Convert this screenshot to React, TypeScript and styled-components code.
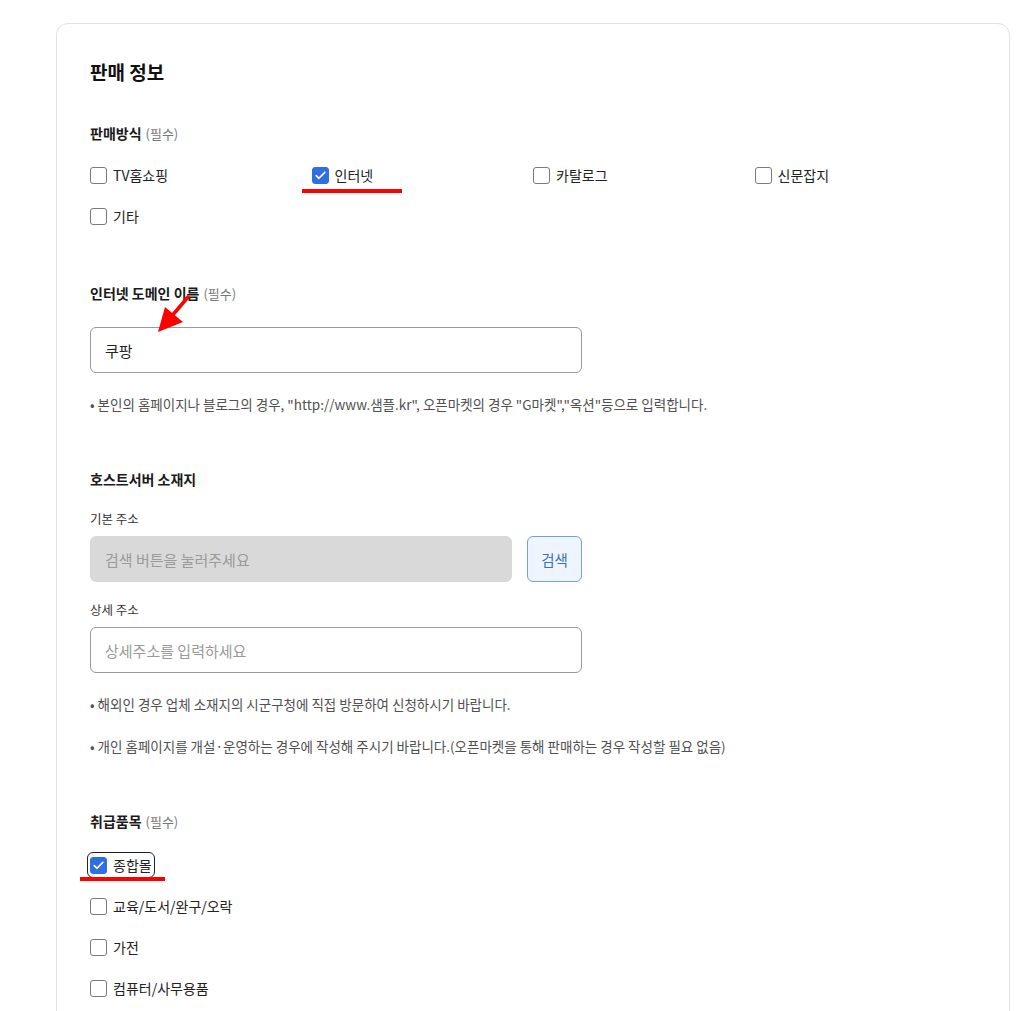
import React from "react";
import styled, { createGlobalStyle } from "styled-components";

const Global = createGlobalStyle`
  html, body { margin: 0; padding: 0; background: #ffffff; }
  body { font-family: "Noto Sans CJK KR", "Noto Sans", sans-serif; color: #222; }
  * { box-sizing: border-box; }
`;

const Page = styled.div`
  padding: 23px 0 0 56px;
  height: 1011px;
  overflow: hidden;
`;

const Card = styled.section`
  position: relative;
  width: 954px;
  min-height: 1100px;
  border: 1px solid #e2e2e2;
  border-radius: 12px;
  padding: 34px 33px 40px 33px;
  display: flex;
  flex-direction: column;
`;

const Title = styled.h2`
  margin: 0;
  font-size: 19px;
  line-height: 28px;
  font-weight: 700;
  color: #111;
`;

const Label = styled.div<{ $mt: number }>`
  margin-top: ${(p) => p.$mt}px;
  font-size: 14px;
  line-height: 20px;
  font-weight: 700;
  color: #1a1a1a;
  position: relative;
`;

const Req = styled.span`
  font-size: 13px;
  font-weight: 400;
  color: #777;
  margin-left: 4px;
`;

const SubLabel = styled.div<{ $mt: number }>`
  margin-top: ${(p) => p.$mt}px;
  font-size: 12.5px;
  line-height: 20px;
  color: #333;
`;

const CheckGrid = styled.div<{ $mt: number; $cols: number }>`
  margin-top: ${(p) => p.$mt}px;
  display: grid;
  grid-template-columns: repeat(${(p) => p.$cols}, 1fr);
  grid-auto-rows: 20px;
  row-gap: 21px;
`;

const Item = styled.label<{ $focus?: boolean }>`
  position: relative;
  display: inline-flex;
  align-items: center;
  gap: 6px;
  height: 20px;
  justify-self: start;
  font-size: 14px;
  color: #222;
  border-radius: 3px;
  ${(p) => (p.$focus ? "outline: 1.5px solid #222; outline-offset: 2px;" : "")}
`;

const Box = styled.span<{ $checked?: boolean }>`
  width: 17px;
  height: 17px;
  border-radius: 3px;
  border: 1px solid ${(p) => (p.$checked ? "#2f6fe4" : "#7a7a7a")};
  background: ${(p) => (p.$checked ? "#2f6fe4" : "#fff")};
  display: inline-flex;
  align-items: center;
  justify-content: center;
  flex: none;
`;

const RedMark = styled.span<{ $left: number; $top: number; $w: number }>`
  position: absolute;
  left: ${(p) => p.$left}px;
  top: ${(p) => p.$top}px;
  width: ${(p) => p.$w}px;
  height: 4px;
  background: #ff0000;
`;

const Input = styled.div<{ $mt?: number; $muted?: boolean; $disabled?: boolean }>`
  margin-top: ${(p) => p.$mt ?? 0}px;
  width: 492px;
  height: 46px;
  border: 1px solid ${(p) => (p.$disabled ? "#d8d8d8" : "#9a9a9a")};
  border-radius: 6px;
  background: ${(p) => (p.$disabled ? "#d9d9d9" : "#fff")};
  padding: 0 14px;
  display: flex;
  align-items: center;
  font-size: 15px;
  color: ${(p) => (p.$muted ? "#9a9a9a" : "#222")};
`;

const Row = styled.div<{ $mt: number }>`
  margin-top: ${(p) => p.$mt}px;
  display: flex;
  gap: 15px;
  width: 492px;
  ${Input} { flex: 1; width: auto; }
`;

const SearchBtn = styled.button`
  width: 55px;
  height: 46px;
  border: 1px solid #6ea2f0;
  border-radius: 6px;
  background: #eef5ff;
  color: #3d6fbf;
  font-family: inherit;
  font-size: 14.5px;
  padding: 0;
`;

const Help = styled.p<{ $mt: number }>`
  margin: ${(p) => p.$mt}px 0 0 0;
  font-size: 13.5px;
  line-height: 20px;
  color: #505050;
`;

const Arrow = styled.svg`
  position: absolute;
  left: 65px;
  top: 12px;
  overflow: visible;
`;

const Check = () => (
  <svg width="11" height="9" viewBox="0 0 11 9">
    <polyline points="1.2,4.6 4,7.3 9.8,1.4" fill="none" stroke="#fff" strokeWidth="1.6" strokeLinecap="round" strokeLinejoin="round" />
  </svg>
);

const CheckItem = ({
  label,
  checked,
  focus,
  mark,
}: {
  label: string;
  checked?: boolean;
  focus?: boolean;
  mark?: { left: number; top: number; w: number };
}) => (
  <Item $focus={focus}>
    <Box $checked={checked}>{checked && <Check />}</Box>
    {label}
    {mark && <RedMark $left={mark.left} $top={mark.top} $w={mark.w} />}
  </Item>
);

export default function App() {
  return (
    <>
      <Global />
      <Page>
        <Card>
          <Title>판매 정보</Title>

          <Label $mt={37}>
            판매방식<Req>(필수)</Req>
          </Label>
          <CheckGrid $mt={21} $cols={4}>
            <CheckItem label="TV홈쇼핑" />
            <CheckItem label="인터넷" checked mark={{ left: -10, top: 24, w: 100 }} />
            <CheckItem label="카탈로그" />
            <CheckItem label="신문잡지" />
            <CheckItem label="기타" />
          </CheckGrid>

          <Label $mt={57}>
            인터넷 도메인 이름<Req>(필수)</Req>
            <Arrow width="40" height="40" viewBox="0 0 40 40">
              <line x1="33" y1="2" x2="16" y2="22" stroke="#ff0000" strokeWidth="3.5" strokeLinecap="round" />
              <polygon points="3,37 10,12 28,27" fill="#ff0000" />
            </Arrow>
          </Label>
          <Input $mt={23}>쿠팡</Input>
          <Help $mt={21}>
            • 본인의 홈페이지나 블로그의 경우, "http://www.샘플.kr", 오픈마켓의 경우 "G마켓","옥션"등으로 입력합니다.
          </Help>

          <Label $mt={55}>호스트서버 소재지</Label>
          <SubLabel $mt={20}>기본 주소</SubLabel>
          <Row $mt={7}>
            <Input $disabled $muted>검색 버튼을 눌러주세요</Input>
            <SearchBtn>검색</SearchBtn>
          </Row>
          <SubLabel $mt={18}>상세 주소</SubLabel>
          <Input $mt={7} $muted>상세주소를 입력하세요</Input>
          <Help $mt={21}>• 해외인 경우 업체 소재지의 시군구청에 직접 방문하여 신청하시기 바랍니다.</Help>
          <Help $mt={22}>
            • 개인 홈페이지를 개설·운영하는 경우에 작성해 주시기 바랍니다.(오픈마켓을 통해 판매하는 경우 작성할 필요 없음)
          </Help>

          <Label $mt={55}>
            취급품목<Req>(필수)</Req>
          </Label>
          <CheckGrid $mt={23} $cols={1}>
            <CheckItem label="종합몰" checked focus mark={{ left: -10, top: 22, w: 85 }} />
            <CheckItem label="교육/도서/완구/오락" />
            <CheckItem label="가전" />
            <CheckItem label="컴퓨터/사무용품" />
          </CheckGrid>
        </Card>
      </Page>
    </>
  );
}
